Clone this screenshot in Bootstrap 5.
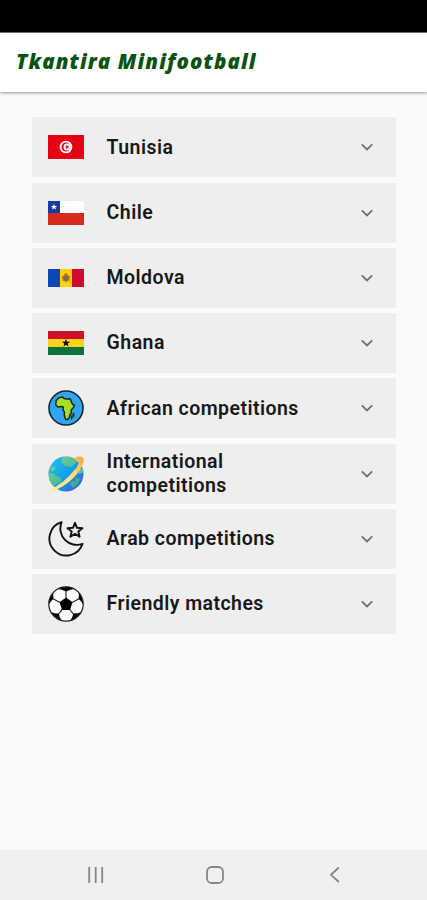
<!DOCTYPE html>
<html lang="en">
<head>
<meta charset="utf-8">
<meta name="viewport" content="width=device-width, initial-scale=1">
<title>Tkantira Minifootball</title>
<link href="https://cdn.jsdelivr.net/npm/bootstrap@5.3.0/dist/css/bootstrap.min.css" rel="stylesheet">
<style>
body{background:#fafafa;font-family:Roboto,"Liberation Sans",sans-serif;height:900px;overflow:hidden}
.status-strip{height:33px;background:#000;border-bottom:1px solid #777}
.app-header{height:59px;background:#fff;box-shadow:0 1px 3px rgba(0,0,0,.4);padding:0 0 2px 16px}
.app-title{font:italic 800 20.5px/1 "Open Sans",Lato,sans-serif;color:#0a5210;letter-spacing:1.1px;margin:0;white-space:nowrap}
.comp-list{padding:25.3px 31px 0 32px;gap:5.25px}
.comp-row{height:60px;background:#eee;border:0;border-radius:0;padding:0 22px 0 16px;color:#181818}
.comp-name{width:224px;margin-left:22.6px;font-size:19.5px;line-height:23.5px;letter-spacing:.45px;font-weight:600;text-align:left}
.sys-nav{height:50px;background:#f0f0f0}
svg{display:block;flex:none}
</style>
<script src="https://cdn.jsdelivr.net/npm/bootstrap@5.3.0/dist/js/bootstrap.bundle.min.js"></script>
</head>
<body class="d-flex flex-column">
<div class="status-strip flex-shrink-0"></div>
<header class="app-header d-flex align-items-center flex-shrink-0"><h1 class="app-title">Tkantira Minifootball</h1></header>
<main class="comp-list d-flex flex-column flex-grow-1">
<button class="comp-row d-flex align-items-center">
<svg width="36" height="24" viewBox="0 0 36 24"><path fill="#e70013" d="M0 0h36v24H0z"/><circle cx="18" cy="12" r="6.3" fill="#fff"/><circle cx="18" cy="12" r="4.5" fill="#e70013"/><circle cx="19.1" cy="12" r="3.6" fill="#fff"/><path fill="#e70013" d="m16.4 12 1.9-.6V9.5l1.1 1.6 1.9-.6-1.2 1.5 1.2 1.5-1.9-.6-1.1 1.6v-1.9z"/></svg>
<span class="comp-name">Tunisia</span>
<svg class="ms-auto" width="14" height="14" viewBox="0 0 14 14" fill="none" stroke="#707070" stroke-width="1.8"><path d="m1.8 4.3 5.2 5.2 5.2-5.2"/></svg></button>
<button class="comp-row d-flex align-items-center">
<svg width="36" height="24" viewBox="0 0 36 24"><path fill="#fff" d="M0 0h36v12H0z"/><path fill="#d82a1c" d="M0 12h36v12H0z"/><path fill="#123ba5" d="M0 0h12v12H0z"/><path fill="#fff" d="m6 2.8.8 2.2h2.4L7.3 6.4 8 8.7 6 7.3 4 8.7l.7-2.3L2.8 5h2.4z"/></svg>
<span class="comp-name">Chile</span>
<svg class="ms-auto" width="14" height="14" viewBox="0 0 14 14" fill="none" stroke="#707070" stroke-width="1.8"><path d="m1.8 4.3 5.2 5.2 5.2-5.2"/></svg></button>
<button class="comp-row d-flex align-items-center">
<svg width="36" height="18" viewBox="0 0 36 18"><path fill="#0b48b5" d="M0 0h12v18H0z"/><path fill="#ffd200" d="M12 0h12v18H12z"/><path fill="#cf0b2f" d="M24 0h12v18H24z"/><path fill="#a77827" d="M14 7l2-.6.7-1.8h2.8l.6 1.8 2 .6-.7 5-1.6-.5-1.8 2-1.8-2-1.6.5z"/><path fill="#be4936" d="M16.2 7h3.6v2h-3.6z"/><path fill="#52708a" d="M16.2 9h3.6v1.4L18 12l-1.8-1.6z"/></svg>
<span class="comp-name">Moldova</span>
<svg class="ms-auto" width="14" height="14" viewBox="0 0 14 14" fill="none" stroke="#707070" stroke-width="1.8"><path d="m1.8 4.3 5.2 5.2 5.2-5.2"/></svg></button>
<button class="comp-row d-flex align-items-center">
<svg width="36" height="24" viewBox="0 0 36 24"><path fill="#cf1126" d="M0 0h36v8H0z"/><path fill="#fcd116" d="M0 8h36v8H0z"/><path fill="#08733d" d="M0 16h36v8H0z"/><path d="m18 7.8 1 3h3.1l-2.5 1.8.9 3-2.5-1.8-2.5 1.8.9-3-2.5-1.8H17z"/></svg>
<span class="comp-name">Ghana</span>
<svg class="ms-auto" width="14" height="14" viewBox="0 0 14 14" fill="none" stroke="#707070" stroke-width="1.8"><path d="m1.8 4.3 5.2 5.2 5.2-5.2"/></svg></button>
<button class="comp-row d-flex align-items-center">
<svg width="36" height="36" viewBox="0 0 36 36"><circle cx="18" cy="18" r="17" fill="#32a5f2" stroke="#17262d" stroke-width="1.6"/><path d="M8.2 10.5 10.5 8l4-.9 1.5 1.3 2.7.7 3.6-.4 1.2 3.5 1.3 2.5 1.7.3-1 2.5-2.3 2.4.1 3-1.4 1.8-.2 2-2 2.8h-2l-1.5-4.7.3-2.4-1.5-2.8.3-2.4-1.6-.7-3.7.5L7.7 15z" fill="#a6df24" stroke="#1c2b16" stroke-width="1.5" stroke-linejoin="round"/><path d="M23.5 28.5l.2-2.6 2-2.5.2 2.5z" fill="#a6df24" stroke="#1c2b16" stroke-width="1.2"/></svg>
<span class="comp-name">African competitions</span>
<svg class="ms-auto" width="14" height="14" viewBox="0 0 14 14" fill="none" stroke="#707070" stroke-width="1.8"><path d="m1.8 4.3 5.2 5.2 5.2-5.2"/></svg></button>
<button class="comp-row d-flex align-items-center">
<svg width="36" height="36" viewBox="0 0 36 36"><defs><linearGradient id="sea" x1="0" y1="0" x2="1" y2="1"><stop stop-color="#20c5f2"/><stop offset=".55" stop-color="#139be9"/><stop offset="1" stop-color="#5746dc"/></linearGradient><linearGradient id="land" x1="0" y1="0" x2="1" y2="1"><stop stop-color="#7bd89a"/><stop offset="1" stop-color="#35a884"/></linearGradient><linearGradient id="ring" x1="0" y1="1" x2="1" y2="0"><stop stop-color="#fff09b"/><stop offset=".65" stop-color="#ffda75"/><stop offset="1" stop-color="#ff9d32"/></linearGradient><clipPath id="globe"><circle cx="18" cy="18" r="17.5"/></clipPath></defs><g clip-path="url(#globe)"><path fill="url(#sea)" d="M0 0h36v36H0z"/><path fill="url(#land)" d="M14 2l7-2 8 3-1 4-5 4-6-1-4-4zM0 17l5 0 3 3 5 2 0 4-5 2-3 5-6-5zM2 12l4-2 2 3-4 3zM22 28l2-3 3 1 1-4 4 0-2 6-5 4z"/><path fill="#5bc69b" d="m30 14 6-2v4l-5 2z"/></g><path d="M27.5 1C32 0 36 .5 35.7 4.5 35.3 12 25 27 5 35.2c-1.8.8-3.6.6-4.2-1.2C9 31 17 24.5 23 18c6.6-7 8.5-10 7.4-12L28 5z" fill="url(#ring)"/></svg>
<span class="comp-name">International competitions</span>
<svg class="ms-auto" width="14" height="14" viewBox="0 0 14 14" fill="none" stroke="#707070" stroke-width="1.8"><path d="m1.8 4.3 5.2 5.2 5.2-5.2"/></svg></button>
<button class="comp-row d-flex align-items-center">
<svg width="36" height="36" viewBox="0 0 36 36" fill="none" stroke="#111" stroke-width="1.9" stroke-linejoin="round"><path d="M13.6 1.2A17 17 0 1 0 34.6 22.8 16.4 16.4 0 0 1 13.6 1.2Z"/><path d="m27 1.8 2 5 5.5.4-4.2 3.4 1.3 5.2-4.6-2.9-4.6 2.9 1.3-5.2-4.2-3.4 5.5-.4z"/></svg>
<span class="comp-name">Arab competitions</span>
<svg class="ms-auto" width="14" height="14" viewBox="0 0 14 14" fill="none" stroke="#707070" stroke-width="1.8"><path d="m1.8 4.3 5.2 5.2 5.2-5.2"/></svg></button>
<button class="comp-row d-flex align-items-center">
<svg width="36" height="36" viewBox="0 0 36 36"><defs><clipPath id="ball"><circle cx="18" cy="18" r="17.2"/></clipPath></defs><circle cx="18" cy="18" r="17.3" fill="#fff"/><g clip-path="url(#ball)"><path d="m18 11.6 6.5 4.7-2.5 7.6h-8l-2.5-7.6zM8.5 3Q13 2.5 18 5.6 23 2.5 27.5 3L24 0H12zM0 11l.5 10q.5-4.5 5-8.3Q4.500 9 6 4.500zM36 11l-.5 10q-.5-4.500-5-8.300Q31.500 9 30 4.500zM3 26q4 2 8 1.500 0 4 3.500 7.500L8 36zM33 26q-4 2-8 1.500 0 4-3.500 7.500L28 36z"/><path d="M18 12V5M24 16.400l7-3.700M21.700 23.400l3.600 4.500M14.300 23.400l-3.600 4.500M12 16.400l-7-3.700" stroke="#222" stroke-width="1.1"/></g><circle cx="18" cy="18" r="17.2" fill="none" stroke="#222" stroke-width="1.2"/></svg>
<span class="comp-name">Friendly matches</span>
<svg class="ms-auto" width="14" height="14" viewBox="0 0 14 14" fill="none" stroke="#707070" stroke-width="1.8"><path d="m1.8 4.3 5.2 5.2 5.2-5.2"/></svg></button>
</main>
<nav class="sys-nav flex-shrink-0">
<svg width="427" height="50" viewBox="0 0 427 50" fill="none" stroke="#858585" stroke-width="1.8"><path d="M89.2 17v16M95.7 17v16M102.2 17v16M338.8 17.5 331 24.8l7.8 7.2"/><rect x="207" y="17" width="16" height="16" rx="4.8"/></svg>
</nav>
</body>
</html>
